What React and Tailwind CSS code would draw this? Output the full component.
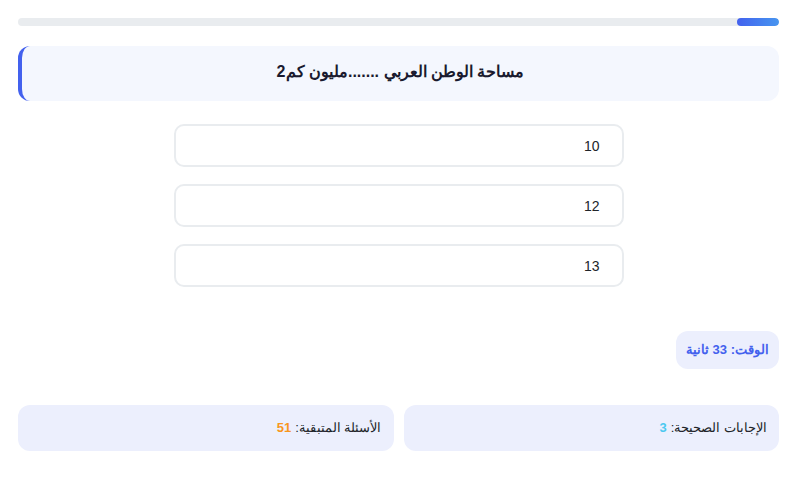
import React from 'react';

const options = ['10', '12', '13'];

export default function App() {
  return (
    <div dir="rtl" className="min-h-[478px] bg-white px-[18px] pt-[18px] pb-[27px]" style={{ fontFamily: '"Liberation Sans", Arial, sans-serif' }}>
      <div className="h-2 w-full rounded-full bg-[#e9ecef] overflow-hidden">
        <div className="h-full w-[42px] rounded-full bg-gradient-to-l from-[#4895ef] to-[#4361ee]" />
      </div>

      <div className="mt-5 flex h-[55px] items-center justify-center rounded-xl border-l-4 border-[#4361ee] bg-[#f4f7fe] pb-[3px]">
        <h2 className="text-base font-bold text-[#1a1a2e]">مساحة الوطن العربي .......مليون كم2</h2>
      </div>

      <div className="mx-auto mt-[23px] flex w-[450px] flex-col gap-[17px]">
        {options.map((o) => (
          <button key={o} className="flex h-[43px] items-center rounded-[10px] border-2 border-[#e9ecef] bg-white px-[22px] text-right text-sm text-[#212529]">
            {o}
          </button>
        ))}
      </div>

      <div className="mt-[44px] flex">
        <div className="flex h-[38px] items-center rounded-xl bg-[#eceffd] px-[10px] text-[13px] font-bold text-[#4361ee]">
          الوقت: 33 ثانية
        </div>
      </div>

      <div className="mt-[36px] grid grid-cols-2 gap-[10px]">
        <div className="flex h-[46px] items-center rounded-xl bg-[#eceffd] px-[12px] text-[13px] text-[#212529]">
          <span>الإجابات الصحيحة:</span>
          <span className="mr-1 font-bold text-[#4cc9f0]">3</span>
        </div>
        <div className="flex h-[46px] items-center rounded-xl bg-[#eceffd] px-[12px] text-[13px] text-[#212529]">
          <span>الأسئلة المتبقية:</span>
          <span className="mr-1 font-bold text-[#f8961e]">51</span>
        </div>
      </div>
    </div>
  );
}
